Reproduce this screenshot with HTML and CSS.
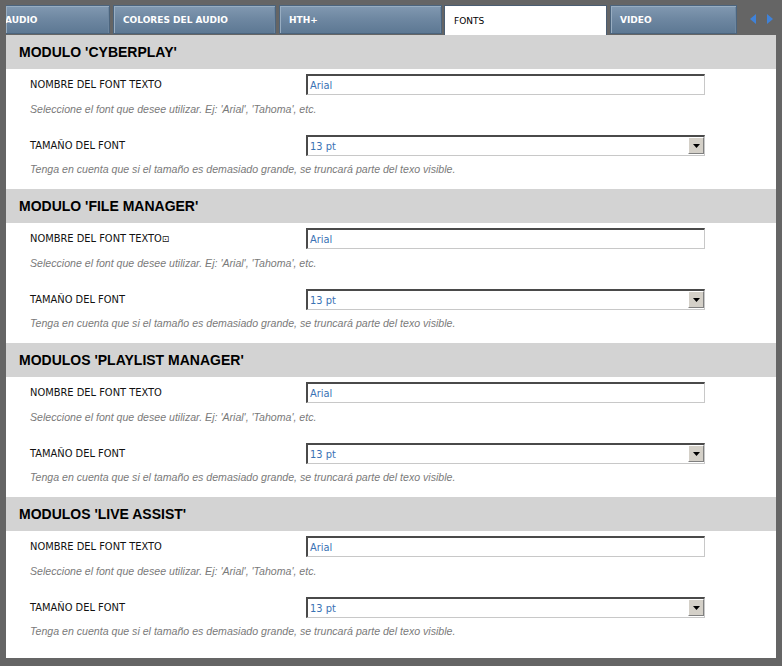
FILE: index.html
```html
<!DOCTYPE html>
<html lang="es">
<head>
<meta charset="utf-8">
<title>Fonts</title>
<link rel="stylesheet" href="styles.css">
</head>
<body>
<div class="frame">
  <div class="tabbar">
    <div class="tabs">
      <div class="tab tab-first"><span>AUDIO</span></div>
      <div class="tab">COLORES DEL AUDIO</div>
      <div class="tab">HTH+</div>
      <div class="tab active">FONTS</div>
      <div class="tab tab-last">VIDEO</div>
    </div>
    <div class="arrows">
      <svg width="8" height="10" viewBox="0 0 8 10"><path d="M7 0 L7 10 L1 5 Z" fill="#3f82d9"/></svg>
      <svg width="8" height="10" viewBox="0 0 8 10"><path d="M1 0 L1 10 L7 5 Z" fill="#3f82d9"/></svg>
    </div>
  </div>
  <div class="panel">
    <section class="module">
      <h2 class="module-title">MODULO 'CYBERPLAY'</h2>
      <div class="module-body">
        <div class="row"><span class="label">NOMBRE DEL FONT TEXTO</span><div class="field">Arial</div></div>
        <p class="help">Seleccione el font que desee utilizar. Ej: 'Arial', 'Tahoma', etc.</p>
        <div class="row row-gap"><span class="label">TAMAÑO DEL FONT</span><div class="field select"><span class="value">13 pt</span><span class="drop"><svg width="7" height="4" viewBox="0 0 7 4"><path d="M0 0 H7 L3.5 4 Z" fill="#000"/></svg></span></div></div>
        <p class="help">Tenga en cuenta que si el tamaño es demasiado grande, se truncará parte del texo visible.</p>
      </div>
    </section>
    <section class="module">
      <h2 class="module-title">MODULO 'FILE MANAGER'</h2>
      <div class="module-body">
        <div class="row"><span class="label">NOMBRE DEL FONT TEXTO<span class="box">⊡</span></span><div class="field">Arial</div></div>
        <p class="help">Seleccione el font que desee utilizar. Ej: 'Arial', 'Tahoma', etc.</p>
        <div class="row row-gap"><span class="label">TAMAÑO DEL FONT</span><div class="field select"><span class="value">13 pt</span><span class="drop"><svg width="7" height="4" viewBox="0 0 7 4"><path d="M0 0 H7 L3.5 4 Z" fill="#000"/></svg></span></div></div>
        <p class="help">Tenga en cuenta que si el tamaño es demasiado grande, se truncará parte del texo visible.</p>
      </div>
    </section>
    <section class="module">
      <h2 class="module-title">MODULOS 'PLAYLIST MANAGER'</h2>
      <div class="module-body">
        <div class="row"><span class="label">NOMBRE DEL FONT TEXTO</span><div class="field">Arial</div></div>
        <p class="help">Seleccione el font que desee utilizar. Ej: 'Arial', 'Tahoma', etc.</p>
        <div class="row row-gap"><span class="label">TAMAÑO DEL FONT</span><div class="field select"><span class="value">13 pt</span><span class="drop"><svg width="7" height="4" viewBox="0 0 7 4"><path d="M0 0 H7 L3.5 4 Z" fill="#000"/></svg></span></div></div>
        <p class="help">Tenga en cuenta que si el tamaño es demasiado grande, se truncará parte del texo visible.</p>
      </div>
    </section>
    <section class="module">
      <h2 class="module-title">MODULOS 'LIVE ASSIST'</h2>
      <div class="module-body">
        <div class="row"><span class="label">NOMBRE DEL FONT TEXTO</span><div class="field">Arial</div></div>
        <p class="help">Seleccione el font que desee utilizar. Ej: 'Arial', 'Tahoma', etc.</p>
        <div class="row row-gap"><span class="label">TAMAÑO DEL FONT</span><div class="field select"><span class="value">13 pt</span><span class="drop"><svg width="7" height="4" viewBox="0 0 7 4"><path d="M0 0 H7 L3.5 4 Z" fill="#000"/></svg></span></div></div>
        <p class="help">Tenga en cuenta que si el tamaño es demasiado grande, se truncará parte del texo visible.</p>
      </div>
    </section>
  </div>
</div>
</body>
</html>
```
FILE: styles.css
```css
html, body {
  margin: 0;
  padding: 0;
  background: #656565;
}
.frame {
  width: 782px;
  height: 666px;
  box-sizing: border-box;
  padding: 5px 6px 8px 6px;
}
.tabbar {
  display: flex;
  align-items: flex-end;
  height: 30px;
  width: 770px;
}
.tabs {
  display: flex;
  align-items: flex-end;
  gap: 3px;
  width: 731px;
  overflow: hidden;
  height: 30px;
}
.tab {
  flex: none;
  box-sizing: border-box;
  height: 29px;
  align-self: flex-start;
  width: 163px;
  padding-left: 9px;
  display: flex;
  align-items: center;
  font-family: "DejaVu Sans", Verdana, sans-serif;
  font-weight: bold;
  font-size: 9px;
  color: #ffffff;
  background: linear-gradient(#8199b1, #6f88a2 45%, #5d7893);
  border: 1px solid #4b647d;
  box-shadow: inset 1px 1px 0 #98adc1, inset -1px 0 0 #6d869f;
}
.tab-first {
  width: 104px;
  padding-left: 0;
  border-left: none;
}
.tab-first span {
  margin-left: -1px;
}
.tab-last {
  width: 127px;
}
.tab.active {
  height: 30px;
  width: 163px;
  margin-left: -1px;
  background: #ffffff;
  color: #000000;
  font-weight: normal;
  border: 1px solid #4a5d72;
  border-bottom: none;
  box-shadow: none;
}
.arrows {
  align-self: flex-start;
  display: flex;
  gap: 9px;
  padding: 9px 0 0 12px;
}
.panel {
  background: #ffffff;
  width: 770px;
  height: 623px;
}
.module-title {
  margin: 0;
  height: 34px;
  box-sizing: border-box;
  padding-left: 13px;
  display: flex;
  align-items: center;
  background: #d3d3d3;
  font-family: "Liberation Sans", Arial, sans-serif;
  font-weight: bold;
  font-size: 14px;
  color: #000000;
}
.module-body {
  padding: 5px 0 13px 24px;
}
.row {
  display: flex;
  align-items: center;
  height: 21px;
}
.row-gap {
  margin-top: 19px;
}
.label {
  width: 276px;
  flex: none;
  font-family: "DejaVu Sans", Tahoma, sans-serif;
  font-size: 9.9px;
  color: #111111;
}
.box {
  font-size: 9px;
}
.field {
  position: relative;
  box-sizing: border-box;
  width: 399px;
  height: 21px;
  border-top: 2px solid #4a4a4a;
  border-left: 2px solid #4a4a4a;
  border-right: 1px solid #c8c8c8;
  border-bottom: 1px solid #c8c8c8;
  padding-left: 2px;
  display: flex;
  align-items: center;
  font-family: "DejaVu Sans", Tahoma, sans-serif;
  font-size: 9.9px;
  color: #3a72b4;
}
.value {
  color: #3a72b4;
}
.drop {
  position: absolute;
  right: 0;
  top: 0;
  width: 16px;
  height: 17px;
  box-sizing: border-box;
  background: #d4d0c8;
  border-top: 1px solid #ffffff;
  border-left: 1px solid #ffffff;
  border-right: 1px solid #808080;
  border-bottom: 1px solid #808080;
  display: flex;
  align-items: center;
  justify-content: center;
}
.help {
  margin: 7px 0 0 0;
  height: 14px;
  line-height: 14px;
  font-family: "Liberation Sans Narrow", "Liberation Sans", Arial, sans-serif;
  font-style: italic;
  font-size: 10.6px;
  color: #7a7a7a;
}
.row-gap + .help {
  margin-top: 6px;
}
```
